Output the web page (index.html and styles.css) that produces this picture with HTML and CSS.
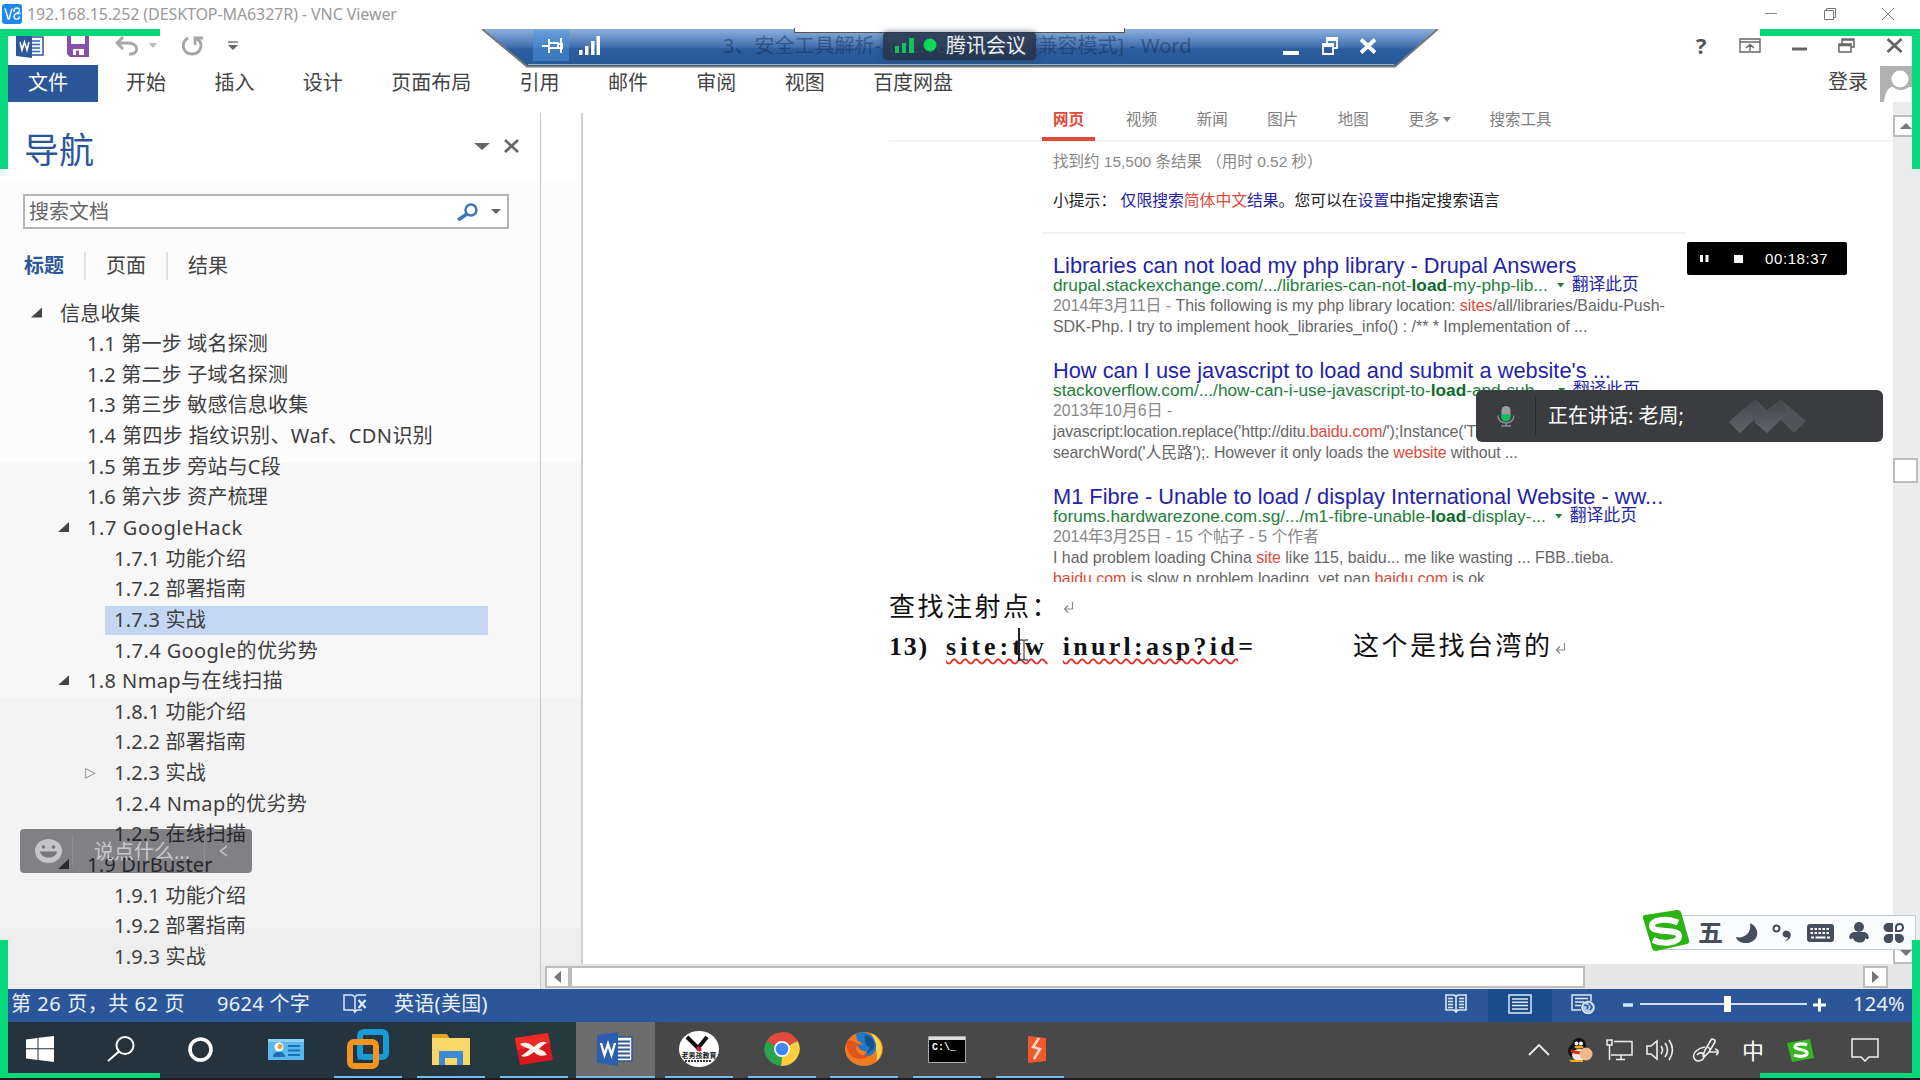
FILE: index.html
```html
<!DOCTYPE html>
<html lang="zh-CN">
<head>
<meta charset="utf-8">
<title>192.168.15.252 (DESKTOP-MA6327R) - VNC Viewer</title>
<link rel="stylesheet" href="styles.css">
</head>
<body>
<div class="screen">
  <header class="titlebar">
    <svg class="vnc-logo" viewBox="0 0 20 20"><rect width="20" height="20" rx="3" fill="#1e88f0"/><path d="M3 4.500l3.200 10.500h.8L10 4.500M12 8c-.5-5 5.500-5 5.500-1.500 0 3-5.500 2.500-5.500 6 0 3.500 5.500 3.500 5.500 0M14 9.500h4.500" fill="none" stroke="#fff" stroke-width="1.400"/></svg>
    <span class="window-title">192.168.15.252 (DESKTOP-MA6327R) - VNC Viewer</span>
    <div class="window-buttons">
      <svg width="12" height="12" viewBox="0 0 12 12"><path d="M0 5.500h12" stroke="#888"/></svg>
      <svg width="12" height="12" viewBox="0 0 12 12" fill="none" stroke="#777"><path d="M.5 2.500h9v9h-9zM2.500 2.500v-2h9v9h-2"/></svg>
      <svg width="12" height="12" viewBox="0 0 12 12"><path d="M0 0l12 12M12 0L0 12" stroke="#888"/></svg>
    </div>
  </header>

  <div class="remote">
    <div class="quickbar">
      <svg class="q-word" width="28" height="24" viewBox="0 0 28 24"><path d="M14 3h13v18H14z" fill="#fff" stroke="#2b579a" stroke-width="1.500"/><path d="M16 7h8M16 10.500h8M16 14h8M16 17.500h8" stroke="#2b6ab5" stroke-width="1.500"/><path d="M0 2l16-2v24L0 22z" fill="#2b579a"/><path d="M4 8l2 8 2.500-8 2.500 8 2-8" fill="none" stroke="#fff" stroke-width="1.600"/></svg>
      <svg class="q-save" width="24" height="22" viewBox="0 0 24 22"><path d="M1 0h22v22H4l-3-3z" fill="#8551ab"/><path d="M5 0h14v9H5zM7 14h11v6H7z" fill="#fff"/><path d="M10 15.500h3V22h-3z" fill="#8551ab"/></svg>
      <svg class="q-undo" width="24" height="20" viewBox="0 0 24 20"><path d="M8 1L2 7l6 6M2 7h11c12 0 11 12 1 11" fill="none" stroke="#aaa" stroke-width="3"/></svg>
      <svg class="q-drop" width="8" height="5" viewBox="0 0 8 5"><path d="M0 0h8L4 5z" fill="#bbb"/></svg>
      <svg class="q-redo" width="24" height="20" viewBox="0 0 24 20"><path d="M7 2C-1 7 2 18 11 18c9 0 12-11 5-15M14 9V2h8" fill="none" stroke="#a5a5a5" stroke-width="2.800"/></svg>
      <svg class="q-more" width="10" height="10" viewBox="0 0 10 10"><path d="M0 1h10" stroke="#777" stroke-width="1.500"/><path d="M0 4h10L5 9z" fill="#666"/></svg>
      <div class="word-buttons">
        <b class="help">?</b>
        <svg width="22" height="15" viewBox="0 0 22 15" fill="none" stroke="#666" stroke-width="1.400"><path d="M1 1h20v13H1zM1 4h20M11 13V7M7 10l4-3.500 4 3.500"/></svg>
        <svg width="15" height="15" viewBox="0 0 15 15"><path d="M0 11h15" stroke="#666" stroke-width="3"/></svg>
        <svg width="17" height="15" viewBox="0 0 17 15" fill="none" stroke="#666" stroke-width="1.500"><path d="M1 6h12v8H1zM1 7.500h12M4 6V1h12v8h-3M4 2h12"/></svg>
        <svg width="17" height="15" viewBox="0 0 17 15"><path d="M1.500 1l14 13M15.500 1l-14 13" stroke="#666" stroke-width="2.800"/></svg>
      </div>
    </div>

    <nav class="ribbon">
      <span class="file">文件</span><span>开始</span><span>插入</span><span>设计</span><span>页面布局</span><span>引用</span><span>邮件</span><span>审阅</span><span>视图</span><span>百度网盘</span>
      <span class="login">登录</span>
      <svg class="avatar" width="32" height="36" viewBox="0 0 32 36"><path d="M0 0h32v36H0z" fill="#b0b0b0"/><circle cx="20" cy="13" r="8.500" fill="#fff"/><path d="M4 36c1-9 4-15 9-15 5 4 11 4 16 0h3v15z" fill="#fff"/></svg>
    </nav>

    <main class="workspace">
      <aside class="navpane">
        <div class="nav-head">
          <h1>导航</h1>
          <svg width="16" height="7" viewBox="0 0 16 7"><path d="M0 0h16L8 7z" fill="#666"/></svg>
          <svg class="nav-close" width="15" height="14" viewBox="0 0 15 14"><path d="M1 1l13 12M14 1L1 13" stroke="#666" stroke-width="2.600"/></svg>
        </div>
        <div class="searchbox">
          <span>搜索文档</span>
          <svg width="23" height="18" viewBox="0 0 23 18"><circle cx="15" cy="7" r="5.500" fill="none" stroke="#3b78b8" stroke-width="2.500"/><path d="M11 11l-9 6" stroke="#3b78b8" stroke-width="3.500"/></svg>
          <svg class="sb-drop" width="10" height="5" viewBox="0 0 10 5"><path d="M0 0h10L5 5z" fill="#666"/></svg>
        </div>
        <div class="nav-tabs"><b>标题</b><span>页面</span><span>结果</span></div>
        <ul class="tree">
          <li class="l0 open">信息收集</li>
          <li class="l1">1.1 第一步 域名探测</li>
          <li class="l1">1.2 第二步 子域名探测</li>
          <li class="l1">1.3 第三步 敏感信息收集</li>
          <li class="l1 wide">1.4 第四步 指纹识别、Waf、CDN识别</li>
          <li class="l1">1.5 第五步 旁站与C段</li>
          <li class="l1">1.6 第六步 资产梳理</li>
          <li class="l1 open wider">1.7 GoogleHack</li>
          <li class="l2">1.7.1 功能介绍</li>
          <li class="l2">1.7.2 部署指南</li>
          <li class="l2 selected">1.7.3 实战</li>
          <li class="l2 wide">1.7.4 Google的优劣势</li>
          <li class="l1 open wide">1.8 Nmap与在线扫描</li>
          <li class="l2">1.8.1 功能介绍</li>
          <li class="l2">1.2.2 部署指南</li>
          <li class="l2 closed">1.2.3 实战</li>
          <li class="l2 wide">1.2.4 Nmap的优劣势</li>
          <li class="l2">1.2.5 在线扫描</li>
          <li class="l1 open">1.9 DirBuster</li>
          <li class="l2">1.9.1 功能介绍</li>
          <li class="l2">1.9.2 部署指南</li>
          <li class="l2">1.9.3 实战</li>
        </ul>
      </aside>

      <div class="docarea">
        <div class="docrow">
          <div class="gutter"></div>
          <article class="page">
            <div class="g-tabs"><b>网页</b><span>视频</span><span>新闻</span><span>图片</span><span>地图</span><span>更多 <i class="tri"></i></span><span class="g-tools">搜索工具</span></div>
            <div class="google">
              <p class="g-stats">找到约 15,500 条结果 （用时 0.52 秒）</p>
              <p class="g-tip">小提示： <a>仅限搜索<em>简体中文</em>结果</a>。您可以在<a>设置</a>中指定搜索语言</p>
              <section class="result">
                <h2>Libraries can not load my php library - Drupal Answers</h2>
                <p class="url"><span>drupal.stackexchange.com/.../libraries-can-not-<b>load</b>-my-php-lib...</span><i class="tri"></i><a>翻译此页</a></p>
                <p><s>2014年3月11日 -</s> This following is my php library location: <em>sites</em>/all/libraries/Baidu-Push-</p>
                <p>SDK-Php. I try to implement hook_libraries_info() : /** * Implementation of ...</p>
              </section>
              <section class="result">
                <h2>How can I use javascript to load and submit a website's ...</h2>
                <p class="url"><span>stackoverflow.com/.../how-can-i-use-javascript-to-<b>load</b>-and-sub...</span><i class="tri"></i><a>翻译此页</a></p>
                <p><s>2013年10月6日 -</s></p>
                <p class="tight">javascript:location.replace('http://ditu.<em>baidu.com</em>/');Instance('T</p>
                <p class="tight">searchWord('人民路');. However it only loads the <em>website</em> without ...</p>
              </section>
              <section class="result third">
                <h2>M1 Fibre - Unable to load / display International Website - ww...</h2>
                <p class="url"><span>forums.hardwarezone.com.sg/.../m1-fibre-unable-<b>load</b>-display-...</span><i class="tri"></i><a>翻译此页</a></p>
                <p class="tight"><s>2014年3月25日 - 15 个帖子 - 5 个作者</s></p>
                <p>I had problem loading China <em>site</em> like 115, baidu... me like wasting ... FBB..tieba.</p>
                <p class="cut"><em>baidu.com</em> is slow n problem loading, yet pan <em>baidu.com</em> is ok</p>
              </section>
            </div>
            <p class="para">查找注射点：<svg class="ret" width="11" height="12" viewBox="0 0 11 12"><path d="M9.500 0v7H2M5 3.500L1.500 7 5 10.500" fill="none" stroke="#888" stroke-width="1.200"/></svg></p>
            <p class="para query"><b class="num">13)</b><b class="bad w1">site:tw</b><b class="bad w2">inurl:asp?id</b><b>=</b><span class="note">这个是找台湾的</span><svg class="ret" width="11" height="12" viewBox="0 0 11 12"><path d="M9.500 0v7H2M5 3.500L1.500 7 5 10.500" fill="none" stroke="#888" stroke-width="1.200"/></svg></p>
          </article>
          <div class="vscroll">
            <div class="sbtn"><svg width="12" height="6" viewBox="0 0 12 6"><path d="M0 6h12L6 0z" fill="#777"/></svg></div>
            <div class="vthumb"></div>
            <div class="sbtn"><svg width="12" height="6" viewBox="0 0 12 6"><path d="M0 0h12L6 6z" fill="#777"/></svg></div>
          </div>
        </div>
        <div class="hscroll">
          <div class="sbtn"><svg width="7" height="12" viewBox="0 0 7 12"><path d="M7 0v12L0 6z" fill="#777"/></svg></div>
          <div class="hthumb"></div>
          <div class="sbtn right"><svg width="7" height="12" viewBox="0 0 7 12"><path d="M0 0v12l7-6z" fill="#777"/></svg></div>
        </div>
      </div>
    </main>

    <footer class="statusbar">
      <span class="s-page">第 26 页，共 62 页</span>
      <span class="s-words">9624 个字</span>
      <svg class="s-proof" width="24" height="20" viewBox="0 0 24 20" fill="none" stroke="#dfe8f5" stroke-width="1.500"><path d="M12 18l-2-2H1V1h8l3 2v15l2-2h5M12 3l2-2h9"/><path d="M15.500 6l7 8M22.500 6l-7 8" stroke-width="2.200"/></svg>
      <span class="s-lang">英语(美国)</span>
      <div class="s-right">
        <svg class="v-read" width="22" height="19" viewBox="0 0 22 19" fill="none" stroke="#dfe8f5" stroke-width="1.600"><path d="M11 2v16l-2-2H1V1h8l2 1.500L13 1h8v15h-8l-2 2M3 4.500h5M3 7.500h5M3 10.500h5M3 13.500h5M14 4.500h5M14 7.500h5M14 10.500h5M14 13.500h5"/></svg>
        <div class="v-print"><svg width="24" height="20" viewBox="0 0 24 20" fill="none" stroke="#dfe8f5" stroke-width="1.500"><path d="M1 1h22v18H1zM4 5h16M4 8.300h16M4 11.600h16M4 15h16"/></svg></div>
        <svg class="v-web" width="24" height="20" viewBox="0 0 24 20" fill="none" stroke="#dfe8f5" stroke-width="1.500"><path d="M20 7V1H1v15h9M4 4.500h13M4 8h9M4 11.500h6"/><circle cx="17" cy="13.500" r="6" fill="#a9c5ea"/><path d="M13 11l4 1-1 3M18 9l3 4-2 3" stroke="#2b579a"/></svg>
        <svg class="zoomer" width="204" height="20" viewBox="0 0 204 20"><path d="M0 11h10" stroke="#cfe6ff" stroke-width="3.500"/><path d="M17 10h167" stroke="#d5dfee" stroke-width="1.800"/><path d="M101 2h7v16h-7z" fill="#fff"/><path d="M190 11h13M196.500 4.500v13" stroke="#fff" stroke-width="3"/></svg>
        <span class="percent">124%</span>
      </div>
    </footer>

    <div class="taskbar">
      <div class="task"><svg width="28" height="26" viewBox="0 0 28 26" fill="#fff"><path d="M0 3.500l11.500-1.500v10.300H0zM12.500 1.800L28 0v12.300H12.500zM0 13.300h11.500V24L0 22.500zM12.500 13.300H28V26l-15.500-1.900z"/></svg></div>
      <div class="task search"><svg width="28" height="26" viewBox="0 0 28 26" fill="none" stroke="#fff" stroke-width="2"><circle cx="18" cy="9.500" r="8.500"/><path d="M12 15.500L1 25"/></svg></div>
      <div class="task cortana"><svg width="27" height="25" viewBox="0 0 27 25"><circle cx="13.500" cy="12.500" r="10.500" fill="none" stroke="#fff" stroke-width="3.600"/></svg></div>
      <div class="task"><svg width="36" height="21" viewBox="0 0 36 21"><path d="M0 0h36v21H0z" fill="#58b9ee"/><path d="M0 0h36v3H0z" fill="#8ed3f5"/><circle cx="11" cy="8" r="4.500" fill="#fff"/><circle cx="12" cy="7.500" r="2.500" fill="#e0a33a"/><path d="M5 18c0-7 12-7 12 0z" fill="#1d6fb5"/><path d="M20 7h12M20 11.500h12M20 16h12" stroke="#1d6fb5" stroke-width="2"/></svg></div>
      <div class="task run"><svg width="42" height="41" viewBox="0 0 42 41" fill="none" stroke-width="6"><rect x="13" y="3" width="26" height="25" rx="4" stroke="#189bd6"/><rect x="3" y="13" width="26" height="24" rx="4" stroke="#f6921e"/><path d="M13 18v10h13" stroke="#189bd6" stroke-width="5"/></svg></div>
      <div class="task run"><svg width="38" height="31" viewBox="0 0 38 31"><path d="M0 0h15l3 5H0z" fill="#e0a321"/><path d="M0 4h38v27H0z" fill="#fbd668"/><path d="M7 31V17h24v14h-6v-7H13v7z" fill="#3c8bd9"/></svg></div>
      <div class="task run"><svg width="38" height="34" viewBox="0 0 38 32"><path d="M0 5L33 0l5 27-33 5z" fill="#d8181c"/><path d="M0 5L33 0l2 10L2 17z" fill="#ee2a26"/><path d="M5 11c7-3 10 0 14 3 4-4 8-7 13-4-3 1-6 4-8 6 3 1 6 2 8 6-7 2-10 0-13-3-4 3-8 6-13 4 3-2 7-5 9-7-3-1-7-2-10-5z" fill="#fff5e8"/></svg></div>
      <div class="task run active"><svg width="36" height="34" viewBox="0 0 36 34"><path d="M18 5h17v24H18z" fill="#fff" stroke="#2b579a" stroke-width="1.500"/><path d="M20 9.500h13M20 13.500h13M20 17.500h13M20 21.500h13M20 25.500h13" stroke="#2b579a" stroke-width="1.800"/><path d="M0 3l21-3v34L0 31z" fill="#2b5fae"/><path d="M4 11l3.500 12L11 12l3.500 11L18 11" fill="none" stroke="#fff" stroke-width="2.400"/></svg></div>
      <div class="task run"><svg width="40" height="36" viewBox="0 0 40 36"><ellipse cx="20" cy="18" rx="20" ry="18" fill="#fff"/><path d="M8 6l11 11L28 6" fill="none" stroke="#111" stroke-width="4"/><circle cx="20" cy="18" r="2.500" fill="#c02040"/><text x="20" y="27" text-anchor="middle" class="tiny">老男孩教育</text><path d="M6 30h27" stroke="#333" stroke-width="2" stroke-dasharray="2 1"/></svg></div>
      <div class="task run"><svg width="36" height="36" viewBox="0 0 36 34"><path d="M18 17L2.400 9A18 17 0 0 1 33.600 9z" fill="#e04a3a"/><path d="M18 17h0L33.600 9A18 17 0 0 1 17 34z" fill="#fbcf3b"/><path d="M18 17L17 34A18 17 0 0 1 2.400 9z" fill="#2ba24c"/><path d="M18 9h15.600A17 17 0 0 0 18 0z" fill="#e04a3a"/><circle cx="18" cy="17" r="8" fill="#fff"/><circle cx="18" cy="17" r="6.300" fill="#4285f4"/></svg></div>
      <div class="task run"><svg width="38" height="34" viewBox="0 0 38 34"><ellipse cx="19" cy="17" rx="19" ry="17" fill="#ee7a22"/><path d="M26 1c12 5 14 20 6 28 0-9-1-18-6-28z" fill="#fcd34a"/><path d="M11 2c10-5 19 2 20 11 1 8-6 13-13 11l6-5c-8 1-11-3-11-6l5-1-6-4z" fill="#1f78c8"/><path d="M20 3c6 0 10 6 9 12-2 5-6 6-8 6l4-5c-5-3-6-8-5-13z" fill="#16508f"/><path d="M2 9c3-1 6-1 9 2l4 1-4 3c0 6 6 10 13 8-5 6-15 5-19-1C2 18 1 13 2 9z" fill="#e2531c"/></svg></div>
      <div class="task run"><svg width="38" height="27" viewBox="0 0 38 27"><path d="M.5.5h37v26H.5z" fill="#000" stroke="#aaa"/><path d="M1 1h36v3H1z" fill="#ddd"/><text x="4" y="14" class="cmd">C:\_</text></svg></div>
      <div class="task run burp"><svg width="18" height="27" viewBox="0 0 18 27"><path d="M0 0l18 2v23L0 27z" fill="#f1592a"/><path d="M11 2L5 11l7 2-6 10" fill="none" stroke="#ffd9c8" stroke-width="2.500"/></svg></div>

      <div class="tray">
        <svg class="t-up" width="22" height="12" viewBox="0 0 22 12"><path d="M1 11L11 1l10 10" fill="none" stroke="#eee" stroke-width="1.800"/></svg>
        <svg class="t-qq" width="26" height="24" viewBox="0 0 26 24"><ellipse cx="11" cy="13" rx="10" ry="8" fill="#111"/><ellipse cx="12" cy="7" rx="7" ry="7" fill="#111"/><ellipse cx="12" cy="17" rx="7" ry="6" fill="#f6e9dd"/><circle cx="9.500" cy="5.500" r="2" fill="#fff"/><circle cx="14" cy="5.500" r="2" fill="#fff"/><ellipse cx="12" cy="9" rx="4.500" ry="1.500" fill="#f5a623"/><path d="M4 11c5 3 11 3 16 0v3c-5 3-11 3-16 0z" fill="#d92a1c"/><circle cx="19" cy="16" r="6.500" fill="#f0b98a"/><path d="M2 22h14v2H4z" fill="#f5a623"/></svg>
        <svg class="t-net" width="27" height="22" viewBox="0 0 27 22" fill="none" stroke="#eee" stroke-width="1.500"><path d="M8 2.500h18V16H5M1 1h5v5H1zM3.500 6v15M15 16v4M10 20.500h9"/></svg>
        <svg class="t-vol" width="28" height="22" viewBox="0 0 28 22" fill="none" stroke="#eee" stroke-width="1.600"><path d="M1 7h4l6-5v18l-6-5H1zM15 7q3 4 0 8M19 4q5 7 0 14M23 1q7 10 0 20"/></svg>
        <svg class="t-pen" width="28" height="24" viewBox="0 0 28 24" fill="none" stroke="#eee" stroke-width="1.600"><path d="M11 18l2-6 6-10c1-2 5 0 4 2l-6 10-5 5zM16 9l3 3M13 9C6 10 0 15 2 20s10 3 10-2c0-4-5-4-7-1M17 14h9M23 11c4 1 4 4 1 6"/></svg>
        <span class="t-ime">中</span>
        <svg class="t-sogou" width="27" height="23" viewBox="0 0 27 23"><path d="M0 4L23 0l4 19-22 4z" fill="#35b81e"/><path d="M20 6c-5-2-12-1-12 2s12 2 12 6-8 4-13 2" fill="none" stroke="#fff" stroke-width="3.200"/></svg>
        <svg class="t-note" width="28" height="24" viewBox="0 0 28 24"><path d="M1 1h26v18h-9l-4 4-4-4H1z" fill="none" stroke="#eee" stroke-width="1.500"/></svg>
      </div>
    </div>
  </div>

  <svg class="rdpbar" width="956" height="40" viewBox="0 0 956 40">
    <defs><linearGradient id="rdp" x1="0" y1="0" x2="0" y2="1"><stop offset="0" stop-color="#8db1de"/><stop offset=".48" stop-color="#3f6fad"/><stop offset=".52" stop-color="#2c5d9e"/><stop offset="1" stop-color="#265795"/></linearGradient></defs>
    <path d="M0 0h956l-43 38H45z" fill="url(#rdp)"/>
    <path d="M0 0l45 37.500h868L956 0" fill="none" stroke="#777" stroke-width="2"/>
    <path d="M46 35.500h866" stroke="#9fb2cc" stroke-width="1"/>
    <path d="M51 1h36v31H51z" fill="#4f93da" fill-opacity=".55"/>
    <path d="M60 17h7M67 10v14M67 14h9v5h-9M79 9v15M76 15h4v4h-4" fill="none" stroke="#fff" stroke-width="2"/>
    <path d="M97 21h3.500v5H97zM103 17h3.500v9H103zM109 12h3.500v14H109zM114.500 7h3.500v19h-3.500z" fill="#fff"/>
    <path d="M801 22h16v4h-16z" fill="#fff"/>
    <path d="M841 15h10v10h-10zM841 17h10M845 15V9h10v10h-4M845 11h10" fill="none" stroke="#fff" stroke-width="1.800"/>
    <path d="M879 10.500l14 13M893 10.500l-14 13" stroke="#fff" stroke-width="3.800"/>
  </svg>
  <div class="rdp-title"><span class="rt-name">3、安全工具解析-</span><span class="rt-host">192.168.15.197</span><span>[兼容模式] - Word</span></div>
  <div class="droptab"></div>
  <div class="meeting">
    <svg width="44" height="18" viewBox="0 0 44 18" fill="#12c25c"><path d="M0 9h4v7H0zM7 6h4v10H7zM14 1h5v15h-5z"/><circle cx="35" cy="8" r="6.500" fill="#09db58"/></svg>
    <span>腾讯会议</span>
  </div>

  <div class="caret"></div>
  <svg class="ibeam" width="10" height="22" viewBox="0 0 10 22"><path d="M1 1h3l1 1 1-1h3M5 2v18M1 21h3l1-1 1 1h3" fill="none" stroke="#555" stroke-width="1.300"/></svg>

  <div class="recorder">
    <svg width="9" height="9" viewBox="0 0 9 9"><path d="M0 1h3v7H0zM5.500 1h3v7h-3z" fill="#fff"/></svg>
    <i class="stop"></i>
    <span>00:18:37</span>
  </div>

  <div class="speaker">
    <div class="mic"><svg width="18" height="21" viewBox="0 0 18 21"><rect x="4.500" y="0" width="9" height="15" rx="4.500" fill="#9a9ca0"/><path d="M4.500 8.500h9V11a4.500 4.500 0 0 1-9 0z" fill="#07c160"/><path d="M1 9.500c0 10 16 10 16 0M9 17v3M4 20h10" fill="none" stroke="#8b8d91" stroke-width="1.400"/></svg></div>
    <span>正在讲话: 老周;</span>
    <svg class="mark" width="78" height="36" viewBox="0 0 78 36"><defs><linearGradient id="mk" x1="0" y1="0" x2="0" y2="1"><stop offset="0" stop-color="#44474b"/><stop offset="1" stop-color="#606367"/></linearGradient></defs><path d="M26 1L0 24l11 11 14-13 13 13 14-13 13 13 12-12L52 2 38 12z" fill="#505357"/><path d="M26 1L0 24l11 11 22-21z" fill="url(#mk)"/><path d="M52 2L25 24l13 11 20-21z" fill="url(#mk)"/></svg>
  </div>

  <div class="chat">
    <svg width="27" height="24" viewBox="0 0 27 24"><ellipse cx="13.500" cy="12" rx="13.500" ry="12" fill="#c5c5c7"/><circle cx="8.500" cy="8" r="1.800" fill="#77777b"/><circle cx="18.500" cy="8" r="1.800" fill="#77777b"/><path d="M5 12.500h17c-1 8-16 8-17 0z" fill="#77777b"/></svg>
    <i></i><span>说点什么...</span><i></i>
    <svg class="chev" width="9" height="12" viewBox="0 0 9 12"><path d="M8 1L1.500 6 8 11" fill="none" stroke="#bbb" stroke-width="1.800"/></svg>
  </div>

  <div class="sogou">
    <svg class="sg-logo" width="48" height="41" viewBox="0 0 48 41"><path d="M1 8Q0 6 3 5L35 0q3 0 4 2l8 28q1 3-2 4L14 41q-3 0-4-3z" fill="#2bb314"/><path d="M36 12.500C26 8 10 9 10 16c0 8 27 2 27 10 0 7-16 9-26 4" fill="none" stroke="#fff" stroke-width="6"/></svg>
    <b>五</b>
    <svg class="sg-moon" width="22" height="20" viewBox="0 0 22 20"><path d="M14 0c12 6 8 20-4 20C5 20 1 18 0 14c8 2 16-4 14-14z" fill="#454d5e"/></svg>
    <svg class="sg-punct" width="20" height="18" viewBox="0 0 20 18"><circle cx="4.500" cy="4.500" r="3" fill="none" stroke="#454d5e" stroke-width="2"/><path d="M16 7a3.500 3.500 0 1 0 0 6c0 2-2 3-3 4 6-1 8-8 3-10z" fill="#454d5e"/></svg>
    <svg class="sg-kbd" width="27" height="18" viewBox="0 0 27 18"><rect width="27" height="18" rx="3" fill="#454d5e"/><path d="M3.500 5h20M3.500 9h20" stroke="#fff" stroke-width="2.200" stroke-dasharray="2.500 1.500"/><path d="M4 13.500h3M8.500 13.500h10M20 13.500h3" stroke="#fff" stroke-width="2"/></svg>
    <svg class="sg-man" width="20" height="21" viewBox="0 0 20 21" fill="#454d5e"><circle cx="10" cy="5" r="5"/><path d="M5 10h10c4 0 6 6 4 7-1 0-2 0-3-1 1 6-11 6-12 0-1 1-2 1-3 1-2-1 0-7 4-7z"/></svg>
    <svg class="sg-grid" width="22" height="20" viewBox="0 0 22 20" fill="#454d5e"><path d="M5 0h5v9H5a4.500 4.500 0 0 1 0-9zM5 11h5v4a4.700 4.700 0 1 1-5-4zM12 11h5a4.500 4.500 0 1 1-5 4z"/><path d="M13 8V4.500A3.500 3.500 0 1 1 17 8z" fill="none" stroke="#454d5e" stroke-width="2"/></svg>
  </div>

  <i class="corner tl"></i><i class="corner tr"></i><i class="corner bl"></i><i class="corner br"></i>
</div>
</body>
</html>
```
FILE: styles.css
```css
* { box-sizing: border-box; }
body, h1, h2, p, ul { margin: 0; padding: 0; }
body { font: 20px/1 "Noto Sans", "Noto Sans CJK SC", sans-serif; color: #444; background: #fff; overflow: hidden; }
svg { display: block; flex: none; }
em, i, s { font-style: normal; text-decoration: none; }
.screen { position: relative; width: 1920px; height: 1080px; display: flex; flex-direction: column; overflow: hidden; white-space: nowrap; }

.titlebar { height: 29px; display: flex; align-items: center; padding: 0 26px 1px 2px; font-size: 16px; color: #999; }
.window-title { letter-spacing: -.09px; }
.vnc-logo { width: 20px; height: 20px; margin-right: 5px; }
.window-buttons { margin-left: auto; display: flex; gap: 46.500px; }

.remote { flex: 1; display: flex; flex-direction: column; border-bottom: 2px solid #1b1b20; }
.quickbar { height: 36px; display: flex; align-items: center; padding: 0 17px 3px 16px; }
.q-save { margin-left: 22px; }
.q-undo { margin-left: 25px; }
.q-drop { margin-left: 10px; }
.q-redo { margin-left: 24px; }
.q-more { margin-left: 23px; }
.word-buttons { margin-left: auto; display: flex; align-items: center; gap: 31px; }
.help { width: 12px; font: bold 22px/15px "Open Sans", sans-serif; color: #555; }

.ribbon { height: 37px; display: flex; align-items: center; padding-left: 8px; }
.ribbon span { margin-right: 48.400px; padding-bottom: 2px; }
.ribbon .file { width: 90px; height: 37px; margin-right: 28px; padding: 8px 20px; background: #2b579a; color: #fff; }
.ribbon .login { margin: 0 12px 0 auto; padding-bottom: 4px; }
.avatar { margin-right: 8px; }

.workspace { height: 887px; display: flex; background: linear-gradient(#fff 80px, #fcfcfc 80px 360px, #f7f7f7 361px 595px, #f3f3f3 596px 826px, #eee 827px); }
.navpane { width: 541px; padding-left: 23px; border: solid; border-image: linear-gradient(#fff 12px, #c8c8c8 12px) 1; border-width: 0 1px 0 0; }
.nav-head { display: flex; align-items: center; height: 92px; padding: 6px 21px 10px 0; }
.nav-head h1 { flex: 1; padding: 3px 0 0 1px; font: 400 35px/1 "Noto Sans CJK SC", sans-serif; color: #2b579a; }
.nav-close { margin-left: 14px; }
.searchbox { width: 486px; height: 35px; display: flex; align-items: center; padding: 0 6px 0 4px; background: #fff; border: 2px solid #b5b5b5; color: #666; }
.searchbox span { flex: 1; }
.sb-drop { margin-left: 12px; }
.nav-tabs { display: flex; align-items: center; height: 30px; margin: 22px 0 0 1px; }
.nav-tabs b { color: #2b579a; width: 60px; }
.nav-tabs span { border-left: 2px solid #e2e2e2; padding-left: 20px; line-height: 28px; width: 82px; }
.tree { list-style: none; margin: 17.500px 0 0 1px; letter-spacing: .2px; color: #3e3e3e; }
.tree li { position: relative; height: 30.650px; line-height: 30px; }
.tree .wide { letter-spacing: .4px; }
.tree .wider { letter-spacing: .6px; }
.tree .l0 { padding-left: 36px; }
.tree .l1 { padding-left: 63px; }
.tree .l2 { padding-left: 90px; }
.tree .selected { width: 383px; height: 29px; line-height: 28px; margin: 1px 0 .650px 81px; padding-left: 9px; background: #c3d6f2; }
.open::before { content: ""; position: absolute; margin-left: -29px; top: 9px; width: 11px; height: 10px; background: #444; clip-path: polygon(100% 0, 100% 100%, 0 100%); }
.closed::before { content: "▷"; position: absolute; left: 61px; color: #888; font: 14px/29px "DejaVu Sans", sans-serif; }

.docarea { flex: 1; display: flex; flex-direction: column; }
.docrow { flex: 1; display: flex; }
.gutter { width: 42px; border: solid; border-image: linear-gradient(#fff 12px, #d0d0d0 12px) 1; border-width: 0 2px 0 0; }
.page { flex: 1; background: #fff; font-family: "Liberation Sans", "Noto Sans CJK SC", sans-serif; }
.g-tabs { margin-left: 306px; height: 40px; display: flex; padding-left: 153px; font: 15.500px/33px "Noto Sans CJK SC", sans-serif; color: #808080; border-bottom: 2px solid #f3f3f3; }
.g-tabs b { height: 39px; padding: 0 11px; margin-right: 31px; color: #dd4b39; border-bottom: 4px solid #dd4b39; }
.g-tabs span { margin-right: 39.600px; }
.g-tabs .g-tools { margin-left: -1px; }
.tri { display: inline-block; width: 8px; height: 5px; background: currentColor; clip-path: polygon(0 0, 100% 0, 50% 100%); vertical-align: 3px; }
.google { margin-left: 459px; width: 643px; padding: 3px 0 0 11px; font-size: 15.900px; color: #666; }
.google em { color: #dd4b39; }
.google a { color: #2424a8; }
.g-stats { font-size: 15.500px; line-height: 34px; color: #888; }
.g-tip { font-size: 15.800px; line-height: 44px; height: 55px; margin-left: -11px; padding-left: 11px; border-bottom: 2px solid #f2f2f2; color: #222; }
.result { margin-top: 22px; height: 83px; }
.result h2 { font: 400 21.800px/20px "Liberation Sans", sans-serif; color: #2424a8; height: 20px; }
.result p { line-height: 21px; height: 21px; }
.result .tight { letter-spacing: -.1px; }
.result s { color: #888; }
.result .url { display: flex; align-items: center; height: 18px; font-size: 17.250px; line-height: 18px; color: #22803a; margin-bottom: 1px; }
.url b { color: #0b6a28; }
.url .tri { margin: 0 7px 0 9px; }
.url a { font-size: 16.800px; }
.result + .result { height: 104px; }
.result.third { height: 95px; }
.result p.cut { height: 14px; overflow: hidden; }
.para { display: flex; align-items: center; height: 46px; padding-left: 306px; font: 400 26px/1 "Noto Sans CJK SC", sans-serif; letter-spacing: 2.500px; color: #111; }
.ret { margin: 6px 0 0 3px; }
.query { height: 36px; }
.query b { font: bold 26px/27px "Liberation Serif", serif; letter-spacing: 0; }
.query .num { letter-spacing: 1.800px; }
.query .bad { text-decoration: underline wavy #e0322a 1.500px; text-underline-offset: 3px; text-decoration-skip-ink: none; }
.query .w1 { margin-left: 17px; letter-spacing: 4px; }
.query .w2 { margin-left: 15px; letter-spacing: 3.300px; }
.query .note { margin-left: 100px; padding-bottom: 5px; }

.vscroll { width: 27px; display: flex; flex-direction: column; background: #ececec; padding-top: 13px; padding-right: 2px; }
.sbtn { width: 25px; height: 22px; flex: none; display: flex; align-items: center; justify-content: center; background: #fff; border: 2px solid #bdbdbd; }
.vthumb { height: 25px; margin: 321px 0 auto; background: #fff; border: 2px solid #bdbdbd; }
.hscroll { height: 25px; display: flex; padding: 0 32px 0 4px; align-items: center; background: #e6e6e6; }
.hthumb { width: 1015px; height: 22px; background: #fff; border: 2px solid #bdbdbd; }
.sbtn.right { margin-left: auto; }

.statusbar { height: 33px; display: flex; align-items: center; padding: 0 0 4px 11px; background: #2b579a; color: #e9eff8; }
.s-page { width: 174px; letter-spacing: .57px; }
.s-words { width: 93px; margin-left: 32px; letter-spacing: .29px; }
.s-proof { margin: 0 27px 0 33px; }
.s-lang { letter-spacing: .3px; }
.s-right { margin-left: auto; display: flex; align-items: center; height: 33px; }
.v-read { margin-right: 21px; }
.v-print { width: 64px; height: 33px; margin: 4px 19px 0 0; padding: 5px 0 0 20px; background: #1a4b8d; }
.zoomer { margin-left: 28px; }
.percent { width: 67px; margin-left: 26px; letter-spacing: .26px; }

.taskbar { flex: 1; display: flex; background: linear-gradient(90deg, #25333f 300px, #263a3f 575px, #454646 640px, #484848 700px); }
.task { width: 82px; display: flex; align-items: center; justify-content: center; border-bottom: 2px solid transparent; }
.task:first-child { margin-left: -1px; }
.task.search { padding-right: 3px; }
.task.cortana { padding-right: 8px; }
.task.run { width: 68px; margin-right: 14.900px; border-color: #76b9ed; }
.task:nth-child(5) { margin-left: 7px; }
.task.run.active { width: 79px; margin: 0 10px 0 -7px; background: #6c6c6c; }
.task.burp { padding-left: 14px; }
.tiny { font: bold 7px "Noto Sans CJK SC", sans-serif; fill: #222; }
.cmd { font: bold 10px "Liberation Mono", monospace; fill: #fff; }
.tray { margin-left: auto; display: flex; align-items: center; padding: 0 41px 0 0; }
.t-qq { margin-left: 17px; }
.t-net { margin-left: 13px; }
.t-vol { margin-left: 13px; }
.t-pen { margin-left: 18px; }
.t-ime { margin-left: 22px; padding-bottom: 2px; font: 22px/1 "Noto Sans CJK SC", sans-serif; color: #fff; }
.t-sogou { margin-left: 23px; }
.t-note { margin-left: 37px; }

.rdpbar { position: absolute; left: 482px; top: 29px; }
.rdp-title { position: absolute; left: 723px; top: 35px; display: flex; line-height: 22px; color: rgba(20, 45, 85, .5); }
.rt-name { width: 162px; }
.rt-host { width: 146px; color: #8fa3bd; }
.droptab { position: absolute; left: 794px; top: 28px; width: 331px; height: 5px; background: #fff; border: 1px solid #555; border-top: 0; }
.meeting { position: absolute; left: 883px; top: 32px; width: 153px; height: 28px; display: flex; align-items: center; gap: 7px; padding-left: 12px; background: rgba(38, 50, 72, .85); border-radius: 4px; color: #e8ecf2; box-shadow: 0 0 6px rgba(38, 50, 72, .6); }
.caret { position: absolute; left: 1018px; top: 628px; width: 2px; height: 33px; background: #222; }
.ibeam { position: absolute; left: 1019px; top: 639px; }
.recorder { position: absolute; left: 1687px; top: 242px; width: 160px; height: 33px; display: flex; align-items: center; padding-left: 13px; background: #000; border-radius: 2px; font: 15px/1 "Liberation Sans", sans-serif; letter-spacing: .6px; color: #fff; }
.stop { width: 9px; height: 8px; margin: 0 22px 0 25px; background: #fff; }
.speaker { position: absolute; left: 1476px; top: 390px; width: 407px; height: 52px; display: flex; align-items: center; background: #3a3c40; border-radius: 6px; color: #fff; }
.mic { width: 60px; height: 38px; display: flex; align-items: center; padding-left: 21px; border-right: 1px solid #25272a; margin-right: 12px; }
.mark { margin-left: 45px; }
.chat { position: absolute; left: 20px; top: 829px; width: 232px; height: 44px; display: flex; align-items: center; padding-left: 15px; background: rgba(15, 15, 24, .5); border-radius: 4px; color: #c8c8ca; }
.chat i { width: 1px; height: 30px; background: #8d8d91; margin-left: 10px; }
.chat span { width: 100px; margin: 2px 0 0 21px; }
.chev { margin-left: 14px; }
.sogou { position: absolute; left: 1660px; top: 915px; width: 256px; height: 35px; display: flex; align-items: center; background: #fbfcff; border: 1px solid #bfcbdc; color: #454d5e; }
.sg-logo { margin: -4px 0 0 -19px; }
.sogou b { font: bold 25px/1 "Noto Sans CJK SC", sans-serif; margin: -3px 0 0 8px; }
.sg-moon { margin-left: 13px; }
.sg-punct { margin-left: 14px; }
.sg-kbd { margin-left: 15px; }
.sg-man { margin-left: 15px; }
.sg-grid { margin-left: 14px; }
.corner { position: absolute; width: 160px; height: 140px; border: 0 solid #06d77b; }
.tl { left: 0; top: 29px; border-width: 7px 0 0 8px; }
.tr { right: 0; top: 29px; border-width: 7px 8px 0 0; }
.bl { left: 0; bottom: 2px; height: 138px; border-width: 0 0 5px 8px; }
.br { right: 0; bottom: 2px; height: 138px; border-width: 0 8px 5px 0; }
```
